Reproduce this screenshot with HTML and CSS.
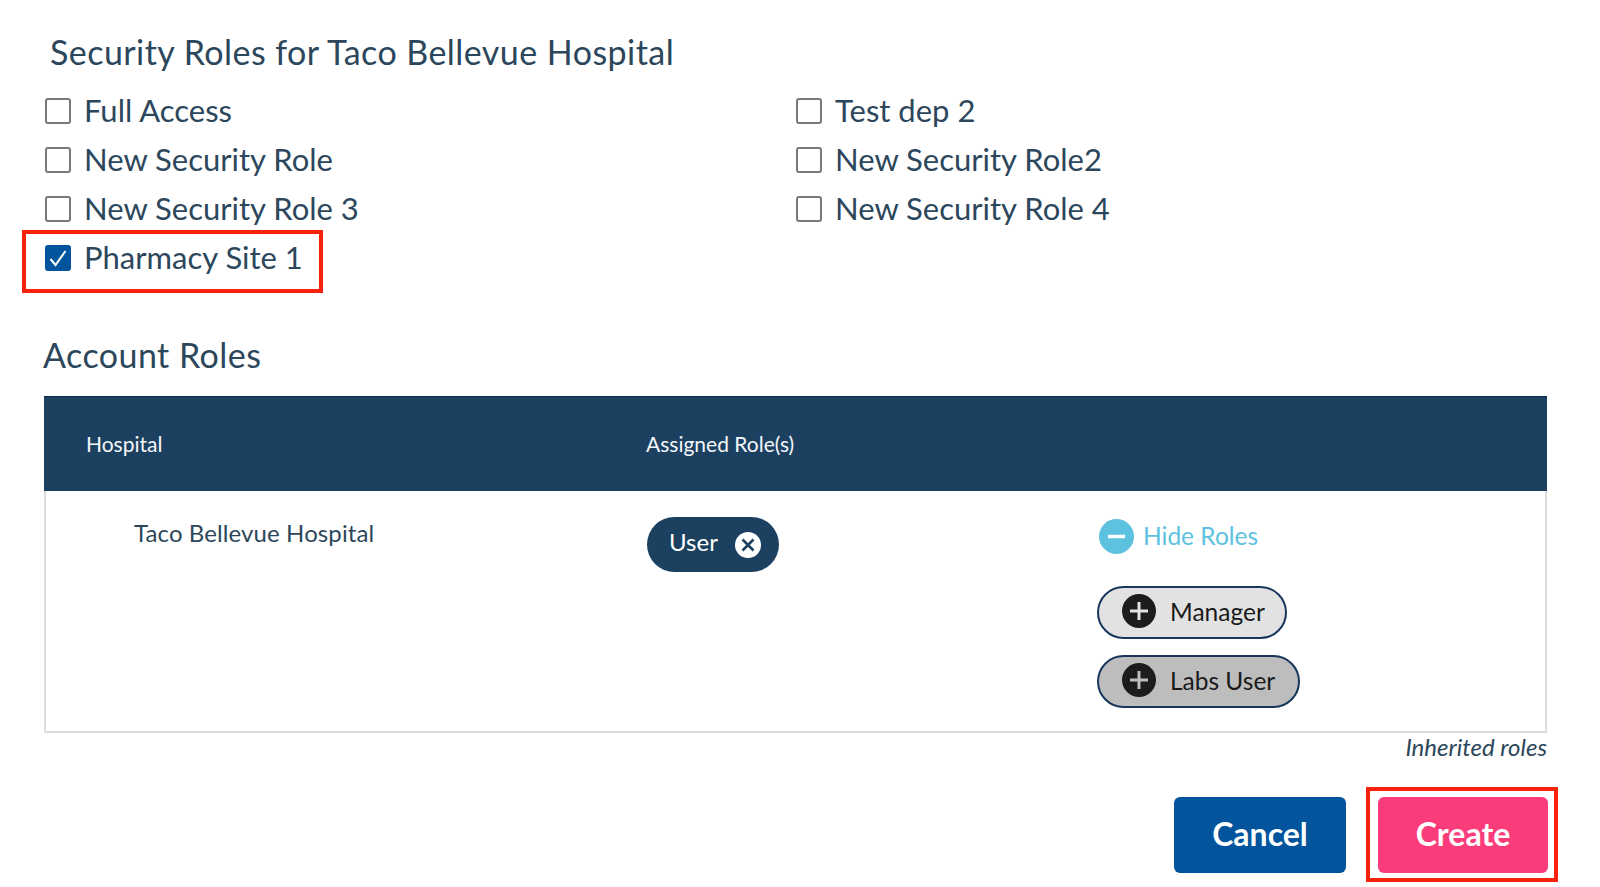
FILE: index.html
```html
<!DOCTYPE html>
<html lang="en">
<head>
  <meta charset="UTF-8">
  <title>Security Roles</title>
  <link rel="stylesheet" href="styles.css">
</head>
<body>
<div class="page">
  <h2 class="title">Security Roles for Taco Bellevue Hospital</h2>

  <div class="checks">
    <label class="check"><span class="box"></span>Full Access</label>
    <label class="check"><span class="box"></span>Test dep 2</label>
    <label class="check"><span class="box"></span>New Security Role</label>
    <label class="check"><span class="box"></span>New Security Role2</label>
    <label class="check"><span class="box"></span>New Security Role 3</label>
    <label class="check"><span class="box"></span>New Security Role 4</label>
    <label class="check">
      <span class="box checked">
        <svg viewBox="0 0 26 26" width="26" height="26"><path d="M5.5 14l5 6L20.5 6" fill="none" stroke="#fff" stroke-width="2"/></svg>
      </span>Pharmacy Site 1
    </label>
  </div>

  <h2 class="subtitle">Account Roles</h2>

  <div class="table">
    <div class="thead">
      <div>Hospital</div>
      <div>Assigned Role(s)</div>
    </div>
    <div class="tbody">
      <div class="hospital">Taco Bellevue Hospital</div>
      <div>
        <span class="pill-user"><span class="pill-text">User</span>
          <svg viewBox="0 0 26 26" width="26" height="26"><circle cx="13" cy="13" r="13" fill="#fff"/><path d="M7.5 7.5l11 11M18.5 7.5l-11 11" stroke="#1b4060" stroke-width="2.6"/></svg>
        </span>
      </div>
      <div class="more">
        <div class="hide">
          <svg viewBox="0 0 35 35" width="35" height="35"><circle cx="17.5" cy="17.5" r="17.5" fill="#5cc2e0"/><path d="M9 17.5h17" stroke="#fff" stroke-width="3.5"/></svg>
          <span class="hide-text">Hide Roles</span>
        </div>
        <span class="pill-add">
          <svg viewBox="0 0 34 34" width="34" height="34"><circle cx="17" cy="17" r="17" fill="#1c1c1c"/><path d="M17 8v18M8 17h18" stroke="#e2e2e2" stroke-width="3"/></svg>
          Manager
        </span>
        <span class="pill-add dark">
          <svg viewBox="0 0 34 34" width="34" height="34"><circle cx="17" cy="17" r="17" fill="#1c1c1c"/><path d="M17 8v18M8 17h18" stroke="#bdbdbd" stroke-width="3"/></svg>
          Labs User
        </span>
      </div>
    </div>
  </div>
  <p class="note">Inherited roles</p>

  <div class="buttons">
    <button class="btn cancel">Cancel</button>
    <button class="btn create">Create</button>
  </div>

  <div class="mark mark-site"></div>
  <div class="mark mark-create"></div>
</div>
</body>
</html>
```

FILE: styles.css
```css
* {
  margin: 0;
  padding: 0;
  box-sizing: border-box;
}

body {
  background: #fff;
  font-family: "Lato", "Noto Sans", sans-serif;
  color: #2c475c;
}

.page {
  position: relative;
  width: 1600px;
  height: 887px;
  padding: 32px 53px 0 44px;
  overflow: hidden;
}

.title {
  margin-left: 6px;
  font-size: 34px;
  line-height: 40px;
  font-weight: 400;
  letter-spacing: 0.45px;
}

.checks {
  display: grid;
  grid-template-columns: 751px 1fr;
  grid-auto-rows: 49px;
  margin-top: 13px;
  margin-left: 1px;
}

.check {
  display: flex;
  align-items: center;
  font-size: 31px;
}

.box {
  flex: none;
  width: 26px;
  height: 26px;
  margin-top: 2px;
  margin-right: 13px;
  border: 2px solid #77797b;
  border-radius: 3px;
  background: #fff;
}

.box.checked {
  border: 0;
  background: #02559c;
}

.box svg {
  display: block;
}

.subtitle {
  margin-top: 54px;
  margin-left: -1px;
  font-size: 34px;
  line-height: 40px;
  font-weight: 400;
  letter-spacing: 0.45px;
}

.table {
  margin-top: 21px;
}

.tbody {
  display: grid;
  grid-template-columns: 602px 449px 1fr;
  height: 242px;
  border: solid #dcdcdc;
  border-width: 0 2px 2px;
}

.thead {
  display: grid;
  grid-template-columns: 560px 1fr;
  align-items: center;
  height: 95px;
  padding: 0 0 2px 42px;
  background: #1b4060;
  border-top: 1px solid #10294a;
  color: #f4f7f9;
  font-size: 21px;
}

.hospital {
  padding: 28px 0 0 88px;
  font-size: 24px;
  line-height: 28px;
  letter-spacing: 0.1px;
}

.pill-user {
  display: inline-flex;
  align-items: center;
  gap: 17px;
  height: 55px;
  margin: 26px 0 0 -1px;
  padding: 0 18px 0 22px;
  border-radius: 28px;
  background: #1b4060;
  color: #fff;
  font-size: 24px;
}

.pill-text {
  margin-top: -6px;
}

.more {
  display: flex;
  flex-direction: column;
  align-items: flex-start;
}

.hide {
  display: flex;
  align-items: center;
  gap: 9px;
  height: 35px;
  margin: 28px 0 0 2px;
  color: #5cc2e0;
  font-size: 24.5px;
}

.hide-text {
  margin-top: -2px;
}

.pill-add {
  display: inline-flex;
  align-items: center;
  gap: 14px;
  height: 53px;
  margin-top: 16px;
  padding: 0 20px 3px 23px;
  border: 2px solid #17365c;
  border-radius: 27px;
  background: #e2e2e2;
  color: #1a1a1a;
  font-size: 24.5px;
}

.hide + .pill-add {
  margin-top: 32px;
}

.pill-add.dark {
  padding-right: 23px;
  background: #bdbdbd;
}

.note {
  text-align: right;
  font-size: 24px;
  line-height: 28px;
  font-style: italic;
}

.buttons {
  display: flex;
  justify-content: flex-end;
  gap: 32px;
  margin-top: 36px;
  margin-right: -1px;
}

.btn {
  height: 76px;
  padding-bottom: 4px;
  border: 0;
  border-radius: 6px;
  color: #fff;
  font-family: inherit;
  font-size: 32px;
  font-weight: 700;
}

.cancel {
  width: 172px;
  background: #02559c;
}

.create {
  width: 170px;
  background: #fb3c7a;
}

/* red annotation boxes over the form */
.mark {
  position: absolute;
  border: 4px solid #f8210c;
}

.mark-site {
  left: 22px;
  top: 230px;
  width: 301px;
  height: 63px;
}

.mark-create {
  left: 1366px;
  top: 787px;
  width: 192px;
  height: 95px;
}
```
